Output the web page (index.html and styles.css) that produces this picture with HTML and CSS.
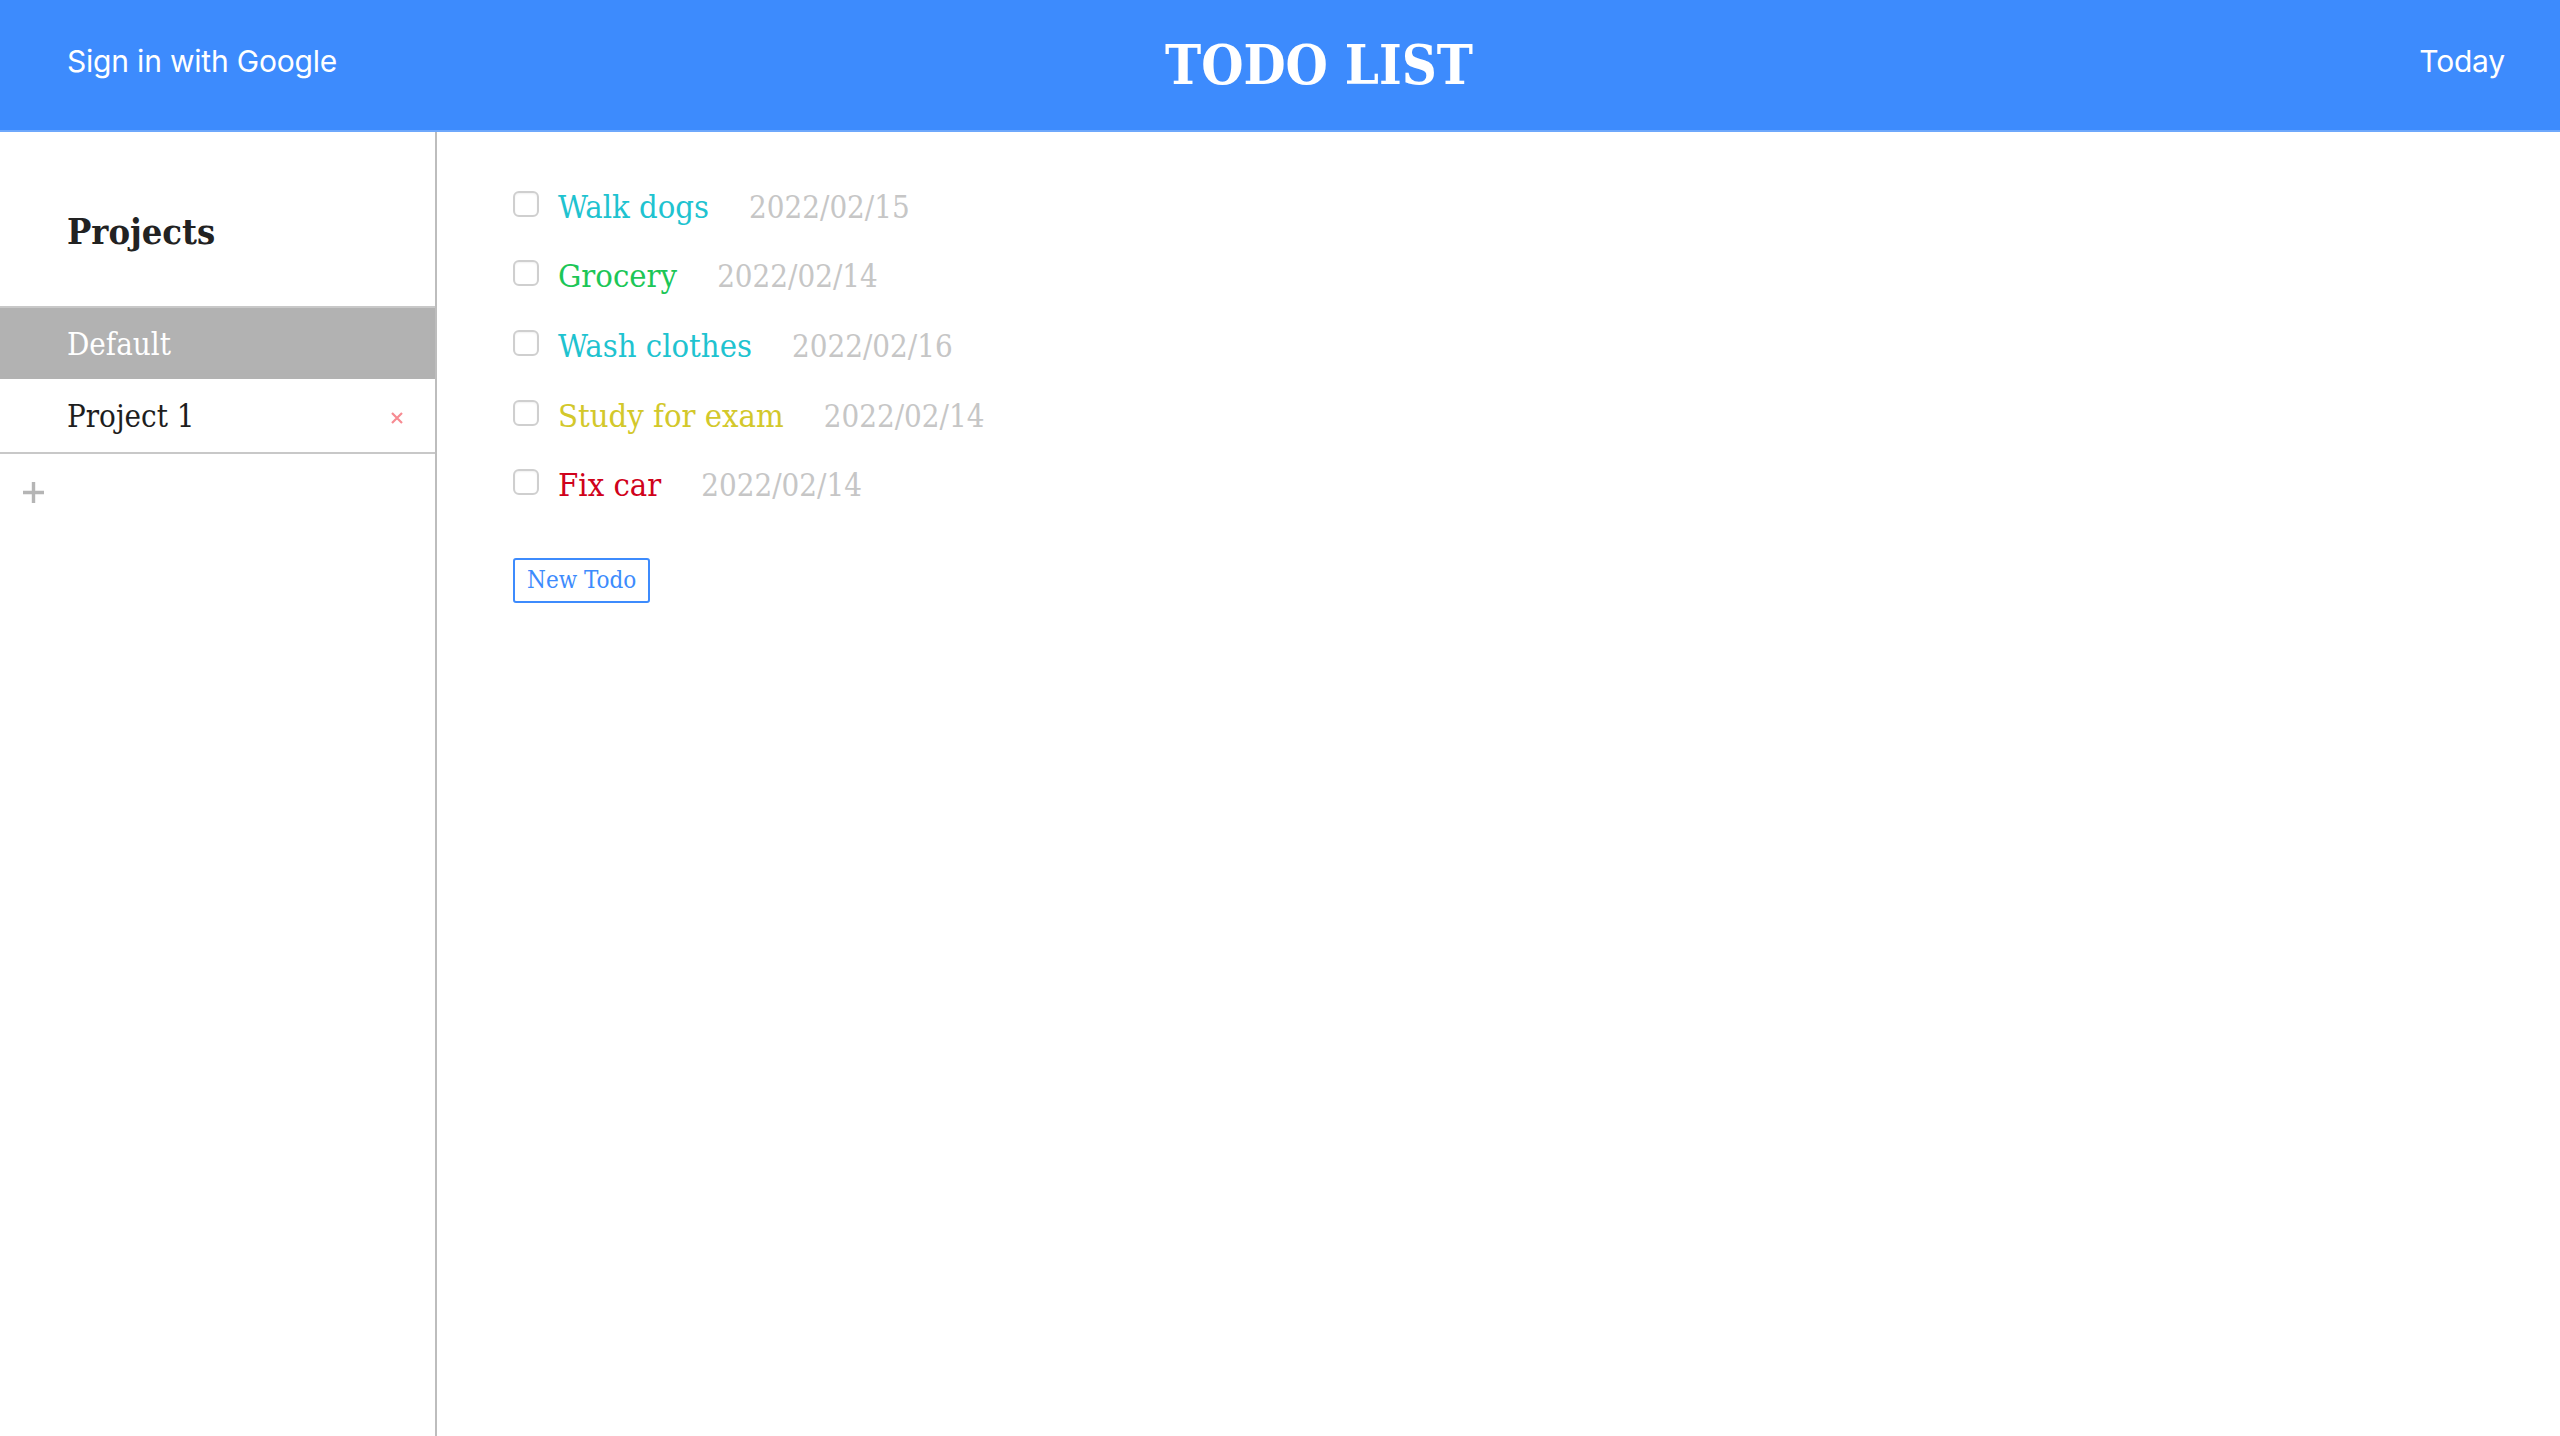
FILE: index.html
```html
<!DOCTYPE html>
<html lang="en">
<head>
<meta charset="utf-8">
<title>Todo List</title>
<link rel="stylesheet" href="styles.css">
</head>
<body>
<header class="topbar">
  <div class="topbar-side topbar-left"><a class="topbar-link">Sign in with Google</a></div>
  <h1 class="title">TODO LIST</h1>
  <div class="topbar-side topbar-right"><a class="topbar-link">Today</a></div>
</header>
<div class="layout">
  <aside class="sidebar">
    <h2 class="sidebar-title">Projects</h2>
    <ul class="project-list">
      <li class="project active"><span class="project-name">Default</span></li>
      <li class="project"><span class="project-name">Project 1</span>
        <svg class="remove" viewBox="0 0 12 12" width="12" height="12"><path d="M1 1L11 11M11 1L1 11" stroke="#f78b92" stroke-width="2.2" fill="none"/></svg>
      </li>
    </ul>
    <div class="add-project">
      <svg viewBox="0 0 21 21" width="21" height="21"><path d="M10.5 0V21M0 10.5H21" stroke="#b5b5b5" stroke-width="3.4" fill="none"/></svg>
    </div>
  </aside>
  <main class="content">
    <ul class="todos">
      <li class="todo"><span class="check"></span><span class="todo-title cyan">Walk dogs</span><span class="todo-date">2022/02/15</span></li>
      <li class="todo"><span class="check"></span><span class="todo-title green">Grocery</span><span class="todo-date">2022/02/14</span></li>
      <li class="todo"><span class="check"></span><span class="todo-title cyan">Wash clothes</span><span class="todo-date">2022/02/16</span></li>
      <li class="todo"><span class="check"></span><span class="todo-title yellow">Study for exam</span><span class="todo-date">2022/02/14</span></li>
      <li class="todo"><span class="check"></span><span class="todo-title red">Fix car</span><span class="todo-date">2022/02/14</span></li>
    </ul>
    <button class="new-todo">New Todo</button>
  </main>
</div>
</body>
</html>
```
FILE: styles.css
```css
* { box-sizing: border-box; }
html, body { margin: 0; padding: 0; }
body {
  font-family: "DejaVu Serif Condensed", "DejaVu Serif", serif;
  color: #222;
  background: #fff;
  height: 1436px;
  overflow: hidden;
}
.topbar {
  height: 132px;
  background: #3d8bfd;
  border-bottom: 2px solid #6ea8fc;
  display: flex;
  align-items: center;
  padding: 0 55px 0 67px;
}
.topbar-side { flex: 1; display: flex; padding-bottom: 9px; }
.topbar-right { justify-content: flex-end; }
.topbar-link {
  font-family: "Inter", "Roboto", sans-serif;
  font-size: 30px;
  color: #fff;
  letter-spacing: -0.2px;
}
.title {
  margin: 0 0 0 66px;
  font-family: "DejaVu Serif Condensed", "DejaVu Serif", serif;
  font-weight: bold;
  font-size: 54px;
  color: #fff;
  line-height: 1;
}
.layout {
  display: flex;
  height: calc(1436px - 132px);
}
.sidebar {
  width: 437px;
  flex: none;
  border-right: 2px solid #bdbdbd;
}
.sidebar-title {
  margin: 0;
  padding: 76px 0 52px 67px;
  font-size: 36px;
  line-height: 46px;
  font-weight: bold;
  color: #222;
}
.project-list {
  list-style: none;
  margin: 0;
  padding: 0;
  border-top: 2px solid #c8c8c8;
  border-bottom: 2px solid #c8c8c8;
}
.project {
  height: 73px;
  display: flex;
  align-items: center;
  justify-content: space-between;
  padding: 0 32px 0 67px;
  font-size: 31px;
  color: #1e1e1e;
}
.project.active { background: #b2b2b2; color: #fff; height: 71px; }
.remove { margin-top: 4px; }
.add-project {
  padding: 28px 0 0 23px;
  height: 60px;
}
.add-project svg { display: block; }
.content {
  flex: 1;
  padding: 40px 0 0 76px;
}
.todos {
  list-style: none;
  margin: 0;
  padding: 0;
}
.todo {
  height: 69.6px;
  display: flex;
  align-items: center;
  font-size: 32.5px;
}
.check {
  width: 26px;
  height: 26px;
  border: 2px solid #cfcfcf;
  border-radius: 6px;
  margin-right: 19px;
  margin-top: -6px;
  box-shadow: inset 0 1px 2px rgba(0,0,0,0.06);
}
.todo-title { margin-right: 40px; }
.cyan { color: #1fc3d0; }
.green { color: #1cc657; }
.yellow { color: #d3c82b; }
.red { color: #d0021b; }
.todo-date { color: #c6c6c6; font-size: 31px; }
.new-todo {
  margin-top: 38px;
  font-family: "DejaVu Serif Condensed", "DejaVu Serif", serif;
  font-size: 24px;
  color: #3d8bfd;
  background: #fff;
  border: 2px solid #3d8bfd;
  border-radius: 3px;
  height: 45px;
  padding: 0 12px;
}
```
